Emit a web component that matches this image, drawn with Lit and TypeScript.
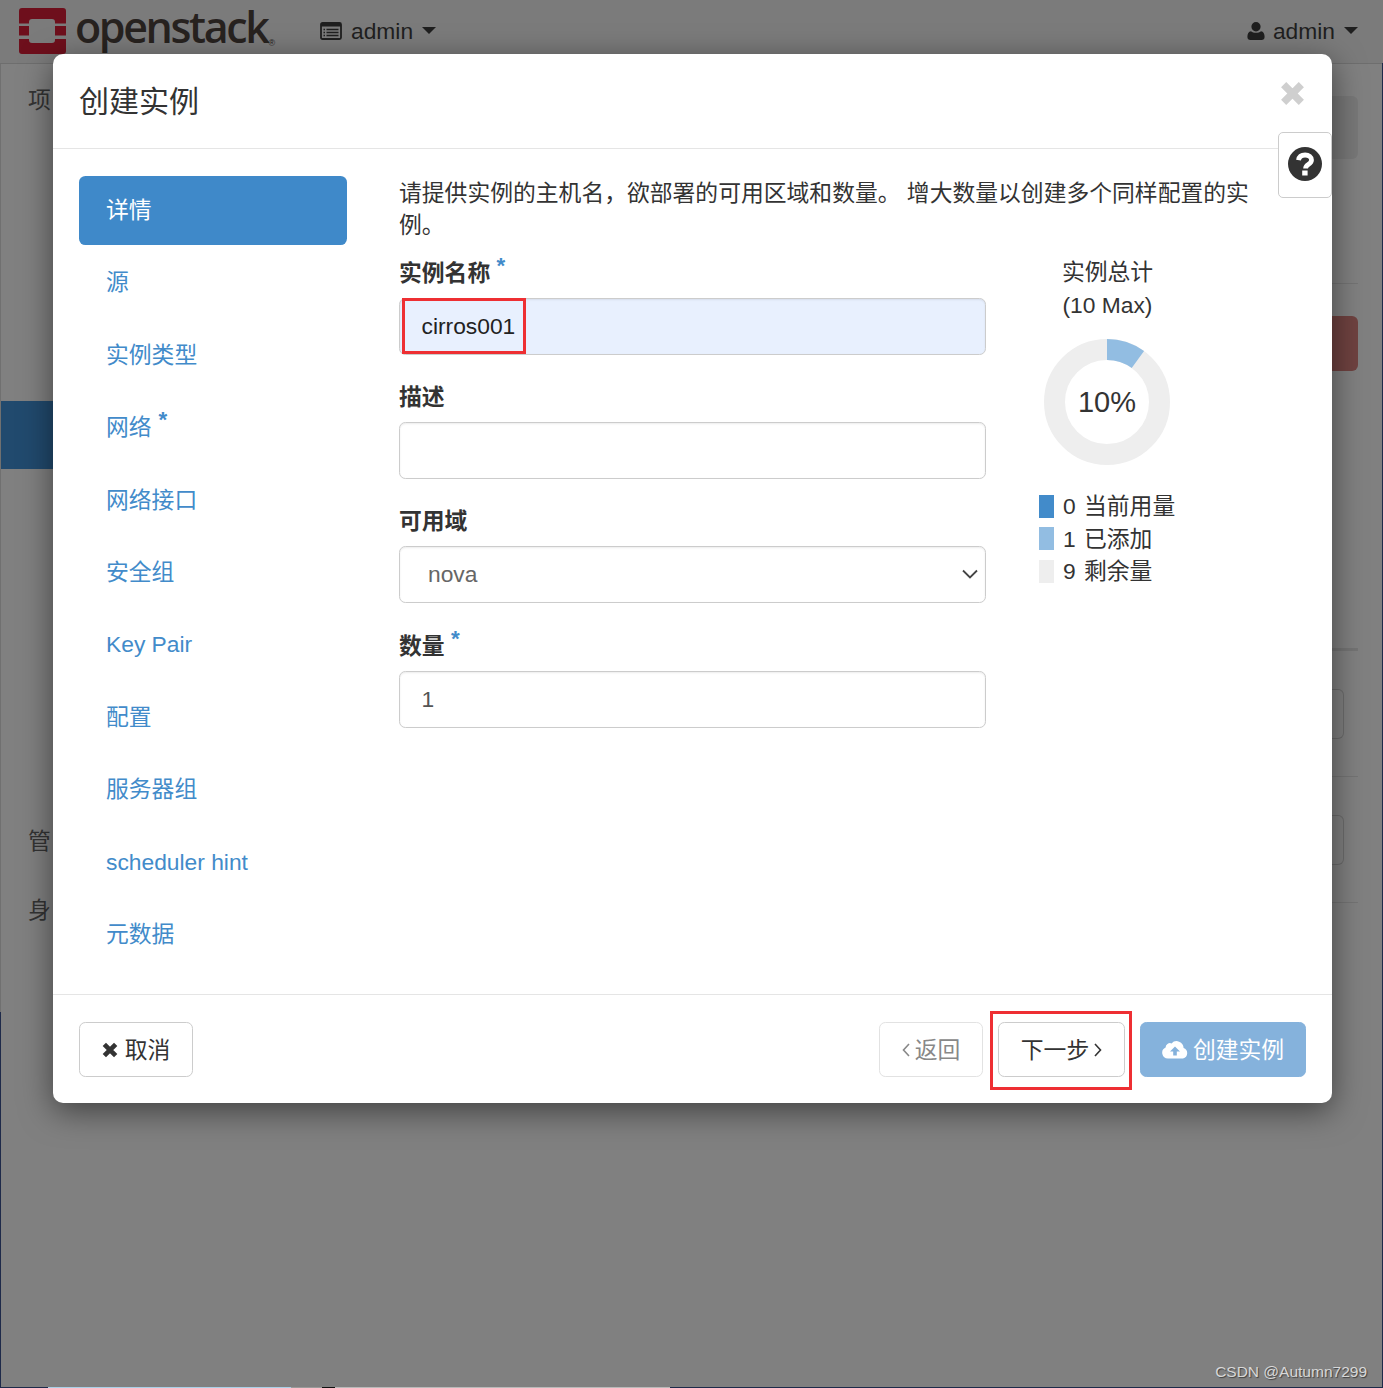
import { LitElement, html, css, svg } from "lit";
import { customElement } from "lit/decorators.js";

const navItems = [
  { t: "详情", active: true },
  { t: "源" },
  { t: "实例类型" },
  { t: "网络", req: true },
  { t: "网络接口" },
  { t: "安全组" },
  { t: "Key Pair" },
  { t: "配置" },
  { t: "服务器组" },
  { t: "scheduler hint" },
  { t: "元数据" },
];

const userIcon = svg`<svg viewBox="0 0 18 20" width="18" height="20"><path fill="#1f1f1f" d="M9 1a4.600 4.600 0 0 1 4.600 4.800A4.600 4.600 0 0 1 9 10.400a4.600 4.600 0 0 1-4.600-4.600A4.600 4.600 0 0 1 9 1zM4 10.200c1.300 1 3 1.600 5 1.600s3.700-.6 5-1.600c2.400.2 3.600 2.400 3.600 5.600 0 2.200-1.200 3.200-3 3.200H3.400c-1.800 0-3-1-3-3.200 0-3.200 1.200-5.400 3.600-5.600z"/></svg>`;

const projIcon = svg`<svg viewBox="0 0 22 18" width="22" height="18"><rect x="1" y="1" width="20" height="16" rx="1.500" fill="none" stroke="#1f1f1f" stroke-width="1.800"/><rect x="1" y="1" width="20" height="3.500" fill="#1f1f1f"/><path d="M3.500 7.500h1.500M6.500 7.500h12M3.500 10.500h1.500M6.500 10.500h12M3.500 13.500h1.500M6.500 13.500h12" stroke="#1f1f1f" stroke-width="1.400"/></svg>`;

const logo = svg`<svg viewBox="0 0 47 46" width="47" height="46"><path fill="#6e0f1c" d="M3 0h41a3 3 0 0 1 3 3v12.500H36V14a3 3 0 0 0-3-3H13a3 3 0 0 0-3 3v1.500H0V3a3 3 0 0 1 3-3zM0 18h10v9.500H0zM36 18h11v9.500H36zM0 31h10v1a3 3 0 0 0 3 3h20a3 3 0 0 0 3-3v-1h11v12a3 3 0 0 1-3 3H3a3 3 0 0 1-3-3z"/></svg>`;

const closeIcon = (c: string, s: number) =>
  svg`<svg viewBox="0 0 24 24" width="${s}" height="${s}"><path fill="none" stroke="${c}" stroke-width="7" d="M3.500 3.500l17 17M20.500 3.500l-17 17"/></svg>`;

const helpIcon = svg`<svg viewBox="0 0 34 34" width="34" height="34"><circle cx="17" cy="17" r="17" fill="#333"/><path fill="none" stroke="#fff" stroke-width="4.800" d="M10.500 13.200c.6-3.400 3.200-5.200 6.600-5.200 3.800 0 6.400 2 6.400 5 0 2.400-1.400 3.400-3.200 4.600-1.700 1.100-2.700 1.900-2.700 4"/><rect x="14.200" y="23.500" width="5.400" height="5" fill="#fff"/></svg>`;

const cloudIcon = svg`<svg viewBox="0 0 26 19" width="26" height="19"><path fill="#fff" fill-rule="evenodd" d="M6 18.500a5.700 5.700 0 0 1-2.400-10.900A4.400 4.400 0 0 1 9.500 3.400 7 7 0 0 1 21.600 8a5.500 5.500 0 0 1-.6 10.500zM13 6.500l-5 5h3.200v4h3.600v-4H18z"/></svg>`;

const chevL = svg`<svg viewBox="0 0 8 14" width="8" height="14"><path fill="none" stroke="currentColor" stroke-width="1.600" d="M7 1L1.500 7 7 13"/></svg>`;
const chevR = svg`<svg viewBox="0 0 8 14" width="8" height="14"><path fill="none" stroke="currentColor" stroke-width="1.600" d="M1 1l5.500 6L1 13"/></svg>`;
const selectArrow = svg`<svg viewBox="0 0 16 10" width="16" height="10"><path fill="none" stroke="#444" stroke-width="1.800" d="M1 1.500l7 7 7-7"/></svg>`;

@customElement("app-root")
export class AppRoot extends LitElement {
  static styles = css`
    :host {
      display: block;
      position: relative;
      width: 1383px;
      height: 1388px;
      overflow: hidden;
      background: #808080;
      font-family: "Liberation Sans", "Noto Sans CJK SC", sans-serif;
      font-size: 22.8px;
      line-height: 32px;
      color: #333;
    }
    .edge-l { position: absolute; left: 0; top: 64px; height: 948px; width: 1px; background: #707070; }
    .edge-l2 { position: absolute; left: 0; top: 1012px; bottom: 0; width: 1px; background: #1e2a4a; }
    .edge-r { position: absolute; right: 0; top: 63px; bottom: 0; width: 1px; background: #1e2a4a; }
    .edge-b {
      position: absolute;
      left: 0;
      right: 0;
      bottom: 0;
      height: 1px;
      background: linear-gradient(
        90deg,
        #1e2a4a 0 48px,
        #a9cfe6 48px 291px,
        #9a9a9a 291px 322px,
        #111 322px 335px,
        #b9b9b9 335px 670px,
        #1e2a4a 670px
      );
    }
    .top {
      height: 63px;
      background: #7b7b7b;
      border-bottom: 1px solid #6e6e6e;
      display: flex;
      align-items: center;
      box-sizing: content-box;
      padding-left: 19px;
      padding-right: 25px;
      color: #1f1f1f;
    }
    .logo { display: flex; align-items: center; margin-top: -1px; }
    .logo svg { display: block; }
    .logo-text {
      font-family: "Open Sans", sans-serif;
      font-weight: 600;
      font-size: 43px;
      letter-spacing: -2.400px;
      margin: -17.500px 0 -8.500px 9px;
      line-height: 60px;
      height: 60px;
      color: #27221f;
    }
    .logo-reg { font-size: 9px; align-self: flex-end; margin: 0 0 6px 1px; line-height: 10px; color: #27221f; }
    .project { display: flex; align-items: center; gap: 9px; margin-left: 45px; margin-top: -2px; }
    .project svg, .userbox svg { display: block; }
    .caret { width: 0; height: 0; border-left: 7px solid transparent; border-right: 7px solid transparent; border-top: 7px solid #1f1f1f; margin-left: 0; }
    .userbox .caret { margin-left: 1px; }
    .spacer { flex: 1; }
    .userbox { display: flex; align-items: center; gap: 8px; margin-top: -2px; }

    .bg-t { position: absolute; color: #333; }
    .bg-blue { position: absolute; left: 1px; top: 401px; width: 52px; height: 68px; background: #214a6e; }
    .bg-panel { position: absolute; left: 1332px; top: 96px; width: 26px; height: 63px; background: #787878; border-radius: 0 6px 6px 0; }
    .bg-danger { position: absolute; left: 1332px; top: 316px; width: 26px; height: 55px; background: #6f4240; border-radius: 0 6px 6px 0; }
    .bg-line { position: absolute; left: 1332px; width: 26px; height: 1px; background: #747474; }
    .bg-line.thick { height: 3px; }
    .bg-box { position: absolute; left: 1332px; width: 12px; height: 50px; box-sizing: border-box; border: 1px solid #6c6c6c; border-left: 0; border-radius: 0 6px 6px 0; }

    .modal {
      position: absolute;
      left: 53px;
      top: 54px;
      width: 1279px;
      height: 1049px;
      background: #fff;
      border-radius: 10px;
      box-shadow: 0 8px 32px rgba(0, 0, 0, 0.5);
      display: flex;
      flex-direction: column;
    }
    .head {
      height: 94px;
      border-bottom: 1px solid #e5e5e5;
      padding: 0 26px;
      display: flex;
      align-items: center;
      position: relative;
      flex: none;
    }
    h4 { margin: 1px 0 0; font-weight: 400; font-size: 30px; line-height: 40px; color: #333; }
    .close { position: absolute; left: 1227px; top: 27px; display: block; line-height: 0; }
    .close svg { display: block; }
    .help {
      position: absolute;
      left: 1225px;
      top: 78px;
      width: 54px;
      height: 66px;
      box-sizing: border-box;
      border: 1px solid #ccc;
      border-radius: 5px;
      background: #fff;
      display: flex;
      align-items: center;
      justify-content: center;
    }
    .help svg { display: block; margin-top: -2px; }
    .body { flex: 1; display: flex; padding: 27px 26px 0; min-height: 0; }
    .side { width: 268px; flex: none; display: flex; flex-direction: column; gap: 3.400px; }
    .side a {
      display: block;
      height: 69px;
      line-height: 69px;
      padding-left: 27px;
      border-radius: 6.400px;
      color: #428bca;
      position: relative;
    }
    .side a.active { background: #3f89c9; color: #fff; }
    .star { color: #428bca; font-size: 22.400px; font-weight: 700; position: relative; top: -8px; margin-left: 7px; line-height: 0; }
    .star.tight { margin-left: 0; }
    .main { margin-left: 52px; flex: 1; min-width: 0; }
    .intro { margin: 1px 0 0; width: 860px; line-height: 32px; }
    .cols { display: flex; margin-top: 13px; }
    .form { width: 587px; flex: none; }
    .field { height: 124.200px; display: flow-root; }
    label.lab { display: block; font-weight: 700; line-height: 32px; margin-top: 3px; height: 41px; margin-bottom: 0; }
    .control {
      height: 57px;
      box-sizing: border-box;
      border: 1px solid #ccc;
      border-radius: 6.400px;
      padding: 0 21.500px;
      line-height: 55px;
      background: #fff;
      position: relative;
      color: #555;
      box-shadow: inset 0 1px 2px rgba(0, 0, 0, 0.08);
    }
    .control.filled { background: #e8f0fe; color: #222; }
    .control.select { color: #666; padding-left: 28px; }
    .control.select svg { position: absolute; right: 7px; top: 22px; display: block; }
    .mark { position: absolute; border: 3px solid #ee2f33; box-sizing: border-box; pointer-events: none; }
    .mark.a { left: 2px; top: -1px; width: 124px; height: 56px; }
    .mark.b { left: 937px; top: 957px; width: 142px; height: 79px; }
    .quota { margin-left: 53px; width: 137px; }
    .quota h5 { margin: 2px 0 0; font-weight: 400; font-size: 22.800px; line-height: 33px; text-align: center; width: 137px; }
    .chart { position: relative; width: 126px; height: 126px; margin: 17px 0 0 5px; }
    .chart svg { display: block; }
    .pct { position: absolute; inset: 0; display: flex; align-items: center; justify-content: center; font-size: 29px; }
    .legend { margin-top: 25px; display: flex; flex-direction: column; }
    .legend div { display: flex; align-items: center; height: 32.500px; white-space: nowrap; }
    .sw { width: 15px; height: 23px; flex: none; margin-right: 9px; }
    .legend .n { width: 21px; }
    .foot {
      height: 109px;
      flex: none;
      border-top: 1px solid #e5e5e5;
      box-sizing: border-box;
      padding: 27px 26px 0;
      display: flex;
      position: relative;
    }
    .btn {
      height: 55px;
      box-sizing: border-box;
      border: 1px solid #ccc;
      border-radius: 6.400px;
      display: flex;
      align-items: center;
      justify-content: center;
      color: #333;
      background: #fff;
      gap: 5px;
    }
    .btn svg { display: block; }
    .cancel { width: 114px; gap: 7px; }
    .back { width: 104px; margin-left: auto; color: #888; border-color: #e2e2e2; }
    .next { width: 127px; margin-left: 15px; }
    .launch { width: 166px; margin-left: 15px; background: #85b2dc; border-color: #85b2dc; color: #fff; }
    .wm { position: absolute; right: 16px; bottom: 6px; font-size: 15.500px; line-height: 20px; color: #d8d8d8; text-shadow: 1px 1px 1px rgba(0, 0, 0, 0.5); }
  `;

  render() {
    const r = 52.5;
    const c = 2 * Math.PI * r;
    return html`
      <div class="top">
        <div class="logo">${logo}<span class="logo-text">openstack</span><span class="logo-reg">®</span></div>
        <div class="project">${projIcon}<span>admin</span><span class="caret"></span></div>
        <span class="spacer"></span>
        <div class="userbox">${userIcon}<span>admin</span><span class="caret"></span></div>
      </div>
      <div class="edge-l"></div>
      <div class="edge-l2"></div>
      <div class="edge-r"></div>
      <div class="edge-b"></div>
      <div class="bg-blue"></div>
      <div class="bg-panel"></div>
      <div class="bg-danger"></div>
      <div class="bg-line" style="top:283px"></div>
      <div class="bg-line thick" style="top:648px"></div>
      <div class="bg-line" style="top:776px"></div>
      <div class="bg-line" style="top:902px"></div>
      <div class="bg-box" style="top:689px"></div>
      <div class="bg-box" style="top:815px"></div>
      <span class="bg-t" style="left:28px;top:84px">项</span>
      <span class="bg-t" style="left:28px;top:825px">管</span>
      <span class="bg-t" style="left:28px;top:894px">身</span>

      <div class="modal">
        <div class="head">
          <h4>创建实例</h4>
          <span class="close">${closeIcon("#cfcfcf", 25)}</span>
        </div>
        <div class="help">${helpIcon}</div>
        <div class="body">
          <nav class="side">
            ${navItems.map(
              (n) =>
                html`<a class=${n.active ? "active" : ""}>${n.t}${n.req ? html`<span class="star">*</span>` : ""}</a>`
            )}
          </nav>
          <div class="main">
            <p class="intro">请提供实例的主机名，欲部署的可用区域和数量。 增大数量以创建多个同样配置的实例。</p>
            <div class="cols">
              <div class="form">
                <div class="field">
                  <label class="lab">实例名称 <span class="star tight">*</span></label>
                  <div class="control filled">cirros001<span class="mark a"></span></div>
                </div>
                <div class="field">
                  <label class="lab">描述</label>
                  <div class="control"></div>
                </div>
                <div class="field">
                  <label class="lab">可用域</label>
                  <div class="control select">nova${selectArrow}</div>
                </div>
                <div class="field">
                  <label class="lab">数量 <span class="star tight">*</span></label>
                  <div class="control">1</div>
                </div>
              </div>
              <div class="quota">
                <h5>实例总计<br />(10 Max)</h5>
                <div class="chart">
                  <svg width="126" height="126" viewBox="0 0 126 126">
                    <circle cx="63" cy="63" r=${r} fill="none" stroke="#eee" stroke-width="21" />
                    <circle
                      cx="63"
                      cy="63"
                      r=${r}
                      fill="none"
                      stroke="#92bde2"
                      stroke-width="21"
                      stroke-dasharray="${c * 0.1} ${c}"
                      transform="rotate(-90 63 63)"
                    />
                  </svg>
                  <div class="pct">10%</div>
                </div>
                <div class="legend">
                  <div><span class="sw" style="background:#428bca"></span><span class="n">0</span>当前用量</div>
                  <div><span class="sw" style="background:#92bde2"></span><span class="n">1</span>已添加</div>
                  <div><span class="sw" style="background:#eee"></span><span class="n">9</span>剩余量</div>
                </div>
              </div>
            </div>
          </div>
        </div>
        <div class="foot">
          <div class="btn cancel">${closeIcon("#333", 16)}<span>取消</span></div>
          <div class="btn back">${chevL}<span>返回</span></div>
          <div class="btn next"><span>下一步</span>${chevR}</div>
          <div class="btn launch">${cloudIcon}<span>创建实例</span></div>
        </div>
        <span class="mark b"></span>
      </div>
      <div class="wm">CSDN @Autumn7299</div>
    `;
  }
}
